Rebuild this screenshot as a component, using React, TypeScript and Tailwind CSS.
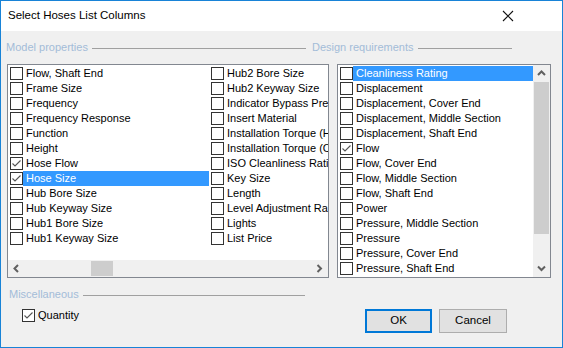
import React from 'react';

type Item = { label: string; checked?: boolean; selected?: boolean };

const modelCol1: Item[] = [
  { label: 'Flow, Shaft End' },
  { label: 'Frame Size' },
  { label: 'Frequency' },
  { label: 'Frequency Response' },
  { label: 'Function' },
  { label: 'Height' },
  { label: 'Hose Flow', checked: true },
  { label: 'Hose Size', checked: true, selected: true },
  { label: 'Hub Bore Size' },
  { label: 'Hub Keyway Size' },
  { label: 'Hub1 Bore Size' },
  { label: 'Hub1 Keyway Size' },
];

const modelCol2: Item[] = [
  { label: 'Hub2 Bore Size' },
  { label: 'Hub2 Keyway Size' },
  { label: 'Indicator Bypass Pressure' },
  { label: 'Insert Material' },
  { label: 'Installation Torque (Hub)' },
  { label: 'Installation Torque (Clamp)' },
  { label: 'ISO Cleanliness Rating' },
  { label: 'Key Size' },
  { label: 'Length' },
  { label: 'Level Adjustment Range' },
  { label: 'Lights' },
  { label: 'List Price' },
];

const design: Item[] = [
  { label: 'Cleanliness Rating', selected: true },
  { label: 'Displacement' },
  { label: 'Displacement, Cover End' },
  { label: 'Displacement, Middle Section' },
  { label: 'Displacement, Shaft End' },
  { label: 'Flow', checked: true },
  { label: 'Flow, Cover End' },
  { label: 'Flow, Middle Section' },
  { label: 'Flow, Shaft End' },
  { label: 'Power' },
  { label: 'Pressure, Middle Section' },
  { label: 'Pressure' },
  { label: 'Pressure, Cover End' },
  { label: 'Pressure, Shaft End' },
];

const Box = ({ checked }: { checked?: boolean }) => (
  <span className="w-[13px] h-[13px] shrink-0 border border-[#333333] bg-white flex items-center justify-center">
    {checked && (
      <svg width="11" height="11" viewBox="0 0 11 11">
        <path d="M1.5 5.5 L4 8 L9.5 2.5" fill="none" stroke="#555" strokeWidth="1.1" />
      </svg>
    )}
  </span>
);

const Row = ({ item }: { item: Item }) => (
  <div className="h-[15px] flex items-center whitespace-nowrap">
    <Box checked={item.checked} />
    <span
      className={`flex-1 h-[15px] leading-[15px] pl-[3px] overflow-hidden ${
        item.selected ? 'bg-[#3399ff] text-white' : 'text-black'
      }`}
    >
      {item.label}
    </span>
  </div>
);

const GroupLabel = ({ text, className }: { text: string; className?: string }) => (
  <div className={`flex items-center ${className ?? ''}`}>
    <span className="text-[#a3bcd8] whitespace-nowrap leading-[14px]">{text}</span>
    <span className="flex-1 h-px bg-[#a0a0a0] ml-[4px] mt-[3px]" />
  </div>
);

const Chevron = ({ dir }: { dir: 'left' | 'right' | 'up' | 'down' }) => {
  const d = {
    left: 'M5 1 L1.5 4.5 L5 8',
    right: 'M1.5 1 L5 4.5 L1.5 8',
    up: 'M1 5 L4.5 1.5 L8 5',
    down: 'M1 1.5 L4.5 5 L8 1.5',
  }[dir];
  const horiz = dir === 'left' || dir === 'right';
  return (
    <svg width={horiz ? 7 : 9} height={horiz ? 9 : 7} viewBox={horiz ? '0 0 7 9' : '0 0 9 7'}>
      <path d={d} fill="none" stroke="#606060" strokeWidth="2" />
    </svg>
  );
};

export default function App() {
  return (
    <div
      className="w-[563px] h-[348px] border border-[#1883d7] bg-[#f0f0f0] flex flex-col text-[11px] text-black"
      style={{ fontFamily: '"Liberation Sans", Arial, sans-serif' }}
    >
      {/* title bar */}
      <div className="h-[30px] bg-white flex items-center justify-between pl-[7px] pr-[48px]">
        <span className="text-[11.5px]">Select Hoses List Columns</span>
        <svg width="12" height="12" viewBox="0 0 12 12">
          <path d="M1 1 L11 11 M11 1 L1 11" stroke="#111" strokeWidth="1.1" />
        </svg>
      </div>

      {/* group headers */}
      <div className="flex mt-[9px] h-[14px]">
        <GroupLabel text="Model properties" className="w-[300px] ml-[5px]" />
        <GroupLabel text="Design requirements" className="w-[200px] ml-[6px]" />
      </div>

      {/* lists */}
      <div className="flex mt-[10px] h-[214px]">
        <div className="ml-[6px] w-[322px] border border-[#828790] bg-white flex flex-col overflow-hidden">
          <div className="flex-1 flex pt-[1px] pl-[2px] overflow-hidden">
            <div className="w-[201px] shrink-0 pr-[2px]">
              {modelCol1.map((it) => (
                <Row key={it.label} item={it} />
              ))}
            </div>
            <div className="w-[201px] shrink-0">
              {modelCol2.map((it) => (
                <Row key={it.label} item={it} />
              ))}
            </div>
          </div>
          <div className="h-[17px] bg-[#f0f0f0] flex items-center">
            <div className="w-[17px] flex justify-center">
              <Chevron dir="left" />
            </div>
            <div className="ml-[66px] w-[22px] h-[15px] bg-[#cdcdcd]" />
            <div className="flex-1" />
            <div className="w-[17px] flex justify-center">
              <Chevron dir="right" />
            </div>
          </div>
        </div>

        <div className="ml-[8px] w-[214px] border border-[#828790] bg-white flex overflow-hidden">
          <div className="flex-1 pt-[1px] pl-[2px] overflow-hidden">
            {design.map((it) => (
              <Row key={it.label} item={it} />
            ))}
          </div>
          <div className="w-[17px] bg-[#f0f0f0] flex flex-col">
            <div className="h-[17px] flex items-center justify-center">
              <Chevron dir="up" />
            </div>
            <div className="mx-[1px] h-[152px] bg-[#cdcdcd]" />
            <div className="flex-1" />
            <div className="h-[17px] flex items-center justify-center">
              <Chevron dir="down" />
            </div>
          </div>
        </div>
      </div>

      {/* miscellaneous */}
      <GroupLabel text="Miscellaneous" className="w-[296px] ml-[8px] mt-[9px] h-[14px]" />

      <div className="flex items-start mt-[8px] h-[24px]">
        <div className="flex items-center ml-[21px] gap-[3px] h-[13px] leading-[13px]">
          <Box checked />
          <span>Quantity</span>
        </div>
        <div className="ml-auto mr-[55px] flex gap-[7px]">
          <button className="w-[67px] h-[24px] border-2 border-[#0078d7] bg-[#e1e1e1] text-[11.5px]">
            OK
          </button>
          <button className="w-[68px] h-[24px] border border-[#adadad] bg-[#e1e1e1] text-[11.5px]">
            Cancel
          </button>
        </div>
      </div>
    </div>
  );
}
